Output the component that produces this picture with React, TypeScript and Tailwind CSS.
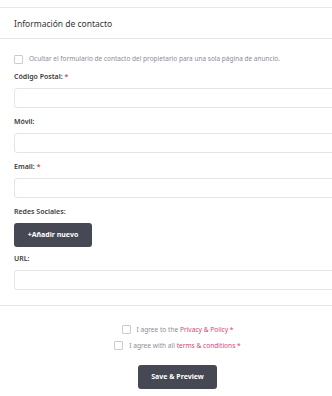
const font = { fontFamily: "'Noto Sans', 'Open Sans', sans-serif" };

const Field = ({ label, required }: { label: string; required?: boolean }) => (
  <div className="mb-[8px]">
    <div className="mb-[5px] h-[12px] text-[7px] font-semibold leading-[12px] text-[#3a3a3a]">
      {label}
      {required && <span className="ml-[2px] text-[#e53e3e]">*</span>}
    </div>
    <div className="h-[20px] w-full rounded-[3px] border border-[#e4e4e4] bg-white" />
  </div>
);

const Box = () => (
  <span className="inline-block h-[9px] w-[9px] shrink-0 rounded-[1px] border border-[#c9ccd6] bg-white" />
);

export default function App() {
  return (
    <div className="min-h-[396px] w-full overflow-hidden bg-white" style={font}>
      <div className="w-[355px] pt-[7px]">
        <div className="border-t border-[#e6e8ee]">
          <div className="flex h-[31px] items-center border-b border-[#e6e8ee] px-[14px] pt-[2px] text-[8.5px] text-[#333]">
            Información de contacto
          </div>

          <div className="px-[14px] pt-[15px]">
            <div className="mb-[7px] flex items-center gap-[6px]">
              <Box />
              <span className="text-[6.5px] leading-[10px] text-[#8a8d99]">
                Ocultar el formulario de contacto del propietario para una sola página de anuncio.
              </span>
            </div>

            <Field label="Código Postal:" required />
            <Field label="Móvil:" />
            <Field label="Email:" required />

            <div className="mb-[5px] h-[12px] text-[7px] font-semibold leading-[12px] text-[#3a3a3a]">
              Redes Sociales:
            </div>
            <button className="mb-[6px] flex h-[24px] w-[78px] items-center justify-center rounded-[3px] bg-[#464853] text-[7px] font-bold text-white">
              +Añadir nuevo
            </button>

            <Field label="URL:" />
          </div>

          <div className="mt-[15px] border-t border-[#e6e8ee] pt-[19px]">
            <div className="flex flex-col items-center gap-[7px] text-[6.6px] leading-[9px] text-[#8a8d99]">
              <div className="flex items-center gap-[6px]">
                <Box />
                <span>
                  I agree to the <span className="text-[#d6457a]">Privacy &amp; Policy</span>{" "}
                  <span className="text-[#e53e3e]">*</span>
                </span>
              </div>
              <div className="flex items-center gap-[6px]">
                <Box />
                <span>
                  I agree with all <span className="text-[#d6457a]">terms &amp; conditions</span>{" "}
                  <span className="text-[#e53e3e]">*</span>
                </span>
              </div>
            </div>
            <div className="mt-[15px] flex justify-center">
              <button className="flex h-[24px] w-[79px] items-center justify-center rounded-[3px] bg-[#464853] text-[7px] font-bold text-white">
                Save &amp; Preview
              </button>
            </div>
          </div>
        </div>
      </div>
    </div>
  );
}
